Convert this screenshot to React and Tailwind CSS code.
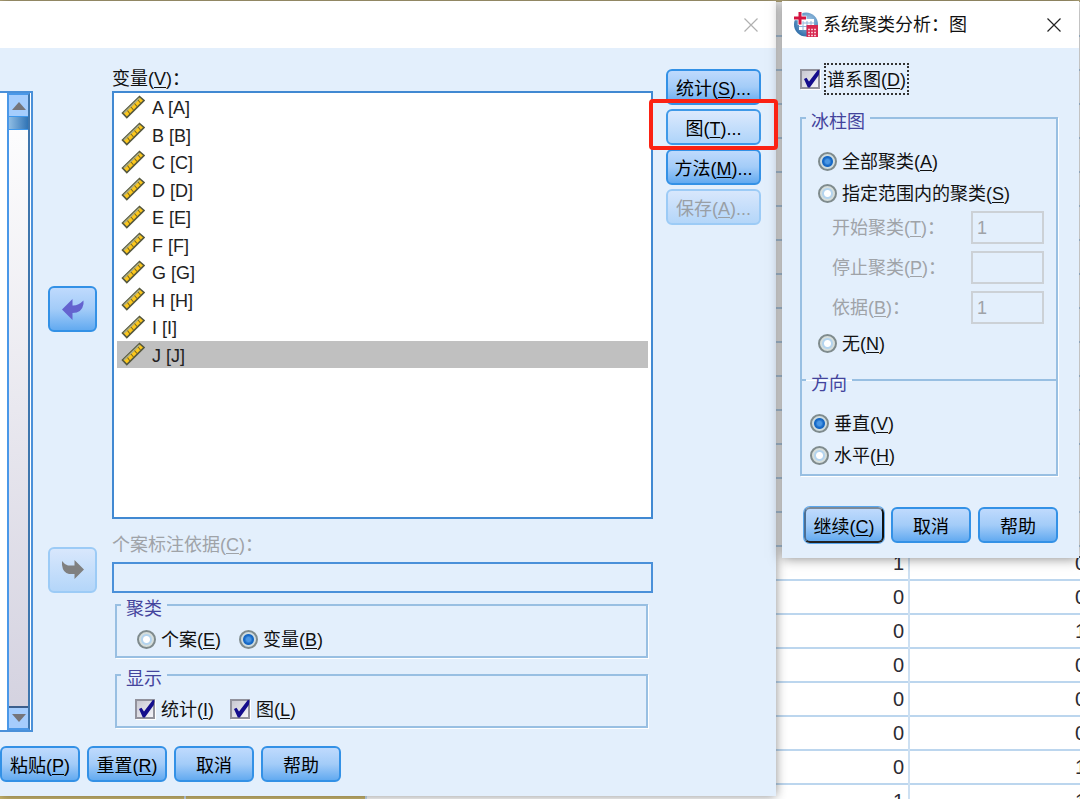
import { useId } from 'react';
import clsx from 'clsx';

const VARIABLES = ['A', 'B', 'C', 'D', 'E', 'F', 'G', 'H', 'I', 'J'];

// Two data columns, only the lower rows are filled in
const SHEET_ROWS = [
  ...Array.from({ length: 16 }, () => ['', '']),
  ['1', '0'],
  ['0', '0'],
  ['0', '1'],
  ['0', '0'],
  ['0', '0'],
  ['0', '0'],
  ['0', '1'],
  ['1', '1'],
];

const BUTTON_VARIANTS = {
  normal: 'border-[#3391e6] bg-linear-to-b from-[#bfdafd] via-[#a3ccf8] to-[#62aaf0] text-black',
  hover: 'border-[#3f99e8] bg-linear-to-b from-[#dce9fd] to-[#aed4f9] text-black',
  primary:
    'border-t-[#7c8a99] border-r-[#111] border-b-[#222] border-l-[#4b6f94] bg-linear-to-b from-[#bfdafd] via-[#a3ccf8] to-[#62aaf0] text-black shadow-[0_0_0_1px_#5aa7ee]',
  disabled: 'border-[#9ccbf6] bg-linear-to-b from-[#d8e7fc] to-[#b4d6f9] text-[#999fa6]',
};

// Caption with an underlined access key: 统计(S)...
function Caption({ text, hotkey, tail }) {
  return (
    <span className="whitespace-nowrap">
      {text}
      {hotkey && (
        <>
          (<u className="underline-offset-2">{hotkey}</u>)
        </>
      )}
      {tail}
    </span>
  );
}

function Button({ variant = 'normal', className, children, ...props }) {
  return (
    <button
      type="button"
      disabled={variant === 'disabled'}
      className={clsx(
        'flex items-center justify-center rounded-md border-2 leading-none',
        BUTTON_VARIANTS[variant],
        className,
      )}
      {...props}
    >
      {children}
    </button>
  );
}

function Radio({ name, checked, ...caption }) {
  const id = useId();
  return (
    <div className="flex h-8 items-center gap-[5px]">
      <input
        id={id}
        type="radio"
        name={name}
        defaultChecked={checked}
        className="size-[19px] shrink-0 appearance-none rounded-full border-2 border-[#7f8b8d] bg-[radial-gradient(circle,#fff_0_3px,#b4d4ee_4px_5px,#d6dedb_6px)] checked:bg-[radial-gradient(circle,#4b97e4_0_2px,#1769c6_4px_5px,#cfdcdf_6px)]"
      />
      <label htmlFor={id} className="pt-0.5">
        <Caption {...caption} />
      </label>
    </div>
  );
}

function Checkbox({ focused, ...caption }) {
  const id = useId();
  return (
    <div className={clsx('flex h-8 items-center', focused ? 'gap-1' : 'gap-1.5')}>
      <span className="relative flex size-5 shrink-0">
        <input
          id={id}
          type="checkbox"
          defaultChecked
          className="peer size-5 appearance-none border-2 border-[#92929c] bg-linear-to-br from-[#c9c9d2] to-[#f4f3f8] shadow-[1px_1px_0_#fff]"
        />
        <svg
          viewBox="0 0 20 20"
          className="pointer-events-none absolute inset-0 hidden size-5 peer-checked:block"
        >
          <path d="M4 10 6.500 8.800 9 12.500 18 .8 19.500 1.500 18.800 6 9.800 18.500 7.800 18.500Z" fill="#140d8c" />
        </svg>
      </span>
      <label
        htmlFor={id}
        className={clsx(
          'pt-0.5',
          focused && 'flex h-8 items-center border-2 border-dotted border-[#333] px-px',
        )}
      >
        <Caption {...caption} />
      </label>
    </div>
  );
}

function Group({ title, className, children }) {
  return (
    <fieldset
      className={clsx('border-2 border-[#98bfe2] px-1 shadow-[1px_1px_0_#fff]', className)}
    >
      <legend className="h-6 px-[5px] pt-1.5 leading-5 text-[#43449c]">{title}</legend>
      {children}
    </fieldset>
  );
}

function RangeField({ value, ...caption }) {
  const id = useId();
  return (
    <div className="flex items-center justify-between">
      <label htmlFor={id} className="text-[#9fa3a8]">
        <Caption {...caption} tail="：" />
      </label>
      <input
        id={id}
        type="text"
        disabled
        defaultValue={value}
        className="h-[33px] w-[73px] border-2 border-[#ccd1d6] bg-[#e3effc] px-1 pt-0.5 text-[#9fa3a8]"
      />
    </div>
  );
}

function RulerIcon() {
  return (
    <svg viewBox="0 0 24 24" className="size-6 shrink-0">
      <path d="M1.500 18 18.500 1.500 23 5.500 5.800 22.500Z" fill="#fcc71c" stroke="#55583f" strokeWidth="1.600" />
      <path d="M3 18 18.500 3" stroke="#a9ac8a" strokeWidth="1.600" />
      <path
        d="m6.500 15.500 2.500 3.500M10 12l2.500 3M13.500 8.500l2.500 3M17 5l2.500 3"
        stroke="#7d6a1c"
        strokeWidth="1.100"
      />
    </svg>
  );
}

function CloseIcon({ className }) {
  return (
    <svg viewBox="0 0 14 14" className={clsx('size-[14px]', className)} fill="none">
      <path d="M.5.5 13.5 13.5M13.5.5.5 13.5" stroke="currentColor" strokeWidth="1.2" />
    </svg>
  );
}

function AppLogo() {
  return (
    <svg viewBox="0 0 24 25" className="h-[25px] w-6 shrink-0">
      <defs>
        <radialGradient id="globe" cx="0.6" cy="0.35" r="0.7">
          <stop offset="0" stopColor="#a9cdea" />
          <stop offset="1" stopColor="#2c6ca8" />
        </radialGradient>
      </defs>
      <circle cx="12" cy="12.5" r="12" fill="url(#globe)" />
      <path d="M5 7h15v11H5z" fill="#fff" />
      <path d="M5 11h15M5 14.500h15M9 9v9M13 9v9M17 9v9" stroke="#8fb5d9" />
      <path d="M0 6h12.500M6 0v13" stroke="#fff" strokeWidth="4.500" />
      <path d="M0 6h12M6 0v12.500" stroke="#d3123f" strokeWidth="3" />
      <path d="M12.500 13H24v12H12.500z" fill="#d62850" />
      <path
        d="M14 17.500h9M14 20.500h9M14 23.500h9"
        stroke="#f7c3cf"
        strokeWidth="1.500"
        strokeDasharray="2 1"
      />
    </svg>
  );
}

function Sheet() {
  return (
    <div className="absolute top-0 left-0">
      <div className="h-0.5 bg-[#b8ab7d]" />
      <table className="w-[1090px] table-fixed border-collapse text-right text-[20px] text-[#2b2b33]">
        <colgroup>
          <col className="w-[185px] bg-[#cdb970]" />
          <col className="w-[181px] bg-[#cdb970]" />
          <col className="w-[181px]" />
          <col className="w-[181px]" />
          <col className="w-[181px]" />
          <col className="w-[181px]" />
        </colgroup>
        <tbody>
          {SHEET_ROWS.map(([left, right], i) => (
            <tr key={i} className="h-[34px] border-b-2 border-[#bcd6ee]">
              <td className="border-r-2 border-[#cde0f2]" />
              <td className="border-r-2 border-[#cde0f2]" />
              <td />
              <td />
              <td className="border-r-2 border-[#cde0f2] p-0 pr-1 leading-5">{left}</td>
              <td className="p-0 pr-1 leading-5">{right}</td>
            </tr>
          ))}
        </tbody>
      </table>
    </div>
  );
}

// Right edge of the source list, with its scroll bar
function SourceList() {
  return (
    <div className="mt-[43px] flex w-[33px] border-y-2 border-r-2 border-[#4a90d9] bg-white pl-[7px]">
      <div className="flex w-[23px] flex-col border-2 border-[#4a98e8] border-r-[#3f76ad] bg-linear-to-b from-white to-[#d3d1df]">
        <button
          type="button"
          aria-label="向上滚动"
          className="flex h-[21px] items-center justify-center bg-[#a5cdfd]"
        >
          <svg viewBox="0 0 14 8" className="h-2 w-[14px]">
            <path d="M0 8 7 0l7 8Z" fill="#75757a" />
          </svg>
        </button>
        <div className="h-[14px] border-y border-[#3f98ec] bg-linear-to-r from-[#8fbde4] to-[#2f74b5]" />
        <div className="flex-1" />
        <button
          type="button"
          aria-label="向下滚动"
          className="flex h-[22px] items-center justify-center border-t-2 border-[#3c5f8d] bg-[#a5cdfd]"
        >
          <svg viewBox="0 0 14 8" className="h-2 w-[14px]">
            <path d="M0 0h14L7 8Z" fill="#75757a" />
          </svg>
        </button>
      </div>
    </div>
  );
}

function ClusterDialog() {
  const caseId = useId();
  return (
    <section className="flex-1 bg-[#e3effc] shadow-[0_0_10px_rgba(0,0,0,0.45)]">
      <header className="flex h-[47px] items-center justify-end bg-white pr-[18px]">
        <button type="button" aria-label="关闭">
          <CloseIcon className="text-[#b0b0b0]" />
        </button>
      </header>

      <div className="flex pr-[15px]">
        <SourceList />

        {/* Transfer buttons */}
        <div className="ml-[15px] flex w-[49px] flex-col gap-[215px] pt-[238px]">
          <Button className="h-[46px]" aria-label="移回">
            <svg viewBox="0 0 22 21" className="h-[21px] w-[22px]">
              <path
                d="M0 10.500 10.500 0v6.500Q16 7 21.500 1.500V5Q20 14 10.500 14v7Z"
                fill="#6463cf"
              />
            </svg>
          </Button>
          <Button variant="disabled" className="h-[46px]" aria-label="移入">
            <svg viewBox="0 0 22 20" className="h-5 w-[22px]">
              <path d="M22 9.500 12.500 0v5.500H6Q3 5 0 1V5Q1 13 7 14h5.500v5Z" fill="#808080" />
            </svg>
          </Button>
        </div>

        <div className="ml-[15px] flex flex-1 flex-col pt-[18px] pb-1">
          <div className="h-[25px] pt-px leading-[25px]">
            <Caption text="变量" hotkey="V" tail="：" />
          </div>
          <div className="h-[428px] border-2 border-[#4189d2] bg-white px-[3px]">
            <ul role="listbox" aria-label="变量" className="grid h-[275px] auto-rows-fr">
              {VARIABLES.map(name => (
                <li
                  key={name}
                  role="option"
                  aria-selected={name === 'J'}
                  className={clsx(
                    'flex items-center gap-[7px] pl-1 leading-5 text-[#222]',
                    name === 'J' && 'bg-[#c0c0c0]',
                  )}
                >
                  <RulerIcon />
                  <span className="pt-[3px]">
                    {name} [{name}]
                  </span>
                </li>
              ))}
            </ul>
          </div>

          <label
            htmlFor={caseId}
            className="mt-[13px] mb-[5px] h-[25px] pt-px leading-[25px] text-[#9fa3a8]"
          >
            <Caption text="个案标注依据" hotkey="C" tail="：" />
          </label>
          <input
            id={caseId}
            type="text"
            disabled
            className="h-[31px] w-full border-2 border-[#4a90d9] bg-[#e3effc] px-1"
          />

          <Group title="聚类" className="mr-[5px] ml-[3px]">
            <div className="flex gap-[18px] pt-1.5 pb-px pl-4">
              <Radio name="cluster" text="个案" hotkey="E" />
              <Radio name="cluster" text="变量" hotkey="B" checked />
            </div>
          </Group>
          <Group title="显示" className="mt-[5px] mr-[5px] ml-[3px]">
            <div className="flex gap-4 pt-1.5 pb-px pl-[14px]">
              <Checkbox text="统计" hotkey="I" />
              <Checkbox text="图" hotkey="L" />
            </div>
          </Group>
        </div>

        <div className="ml-[13px] flex w-[95px] flex-col gap-1 pt-[21px]">
          <Button className="h-9 pt-[3px]">
            <Caption text="统计" hotkey="S" tail="..." />
          </Button>
          <div className="relative flex flex-col">
            <Button variant="hover" className="h-9 pt-[3px]">
              <Caption text="图" hotkey="T" tail="..." />
            </Button>
            <div className="pointer-events-none absolute -inset-x-[17px] -top-[10px] -bottom-[5px] z-10 rounded-sm border-4 border-[#fb2213]" />
          </div>
          <Button className="h-9 pt-[3px]">
            <Caption text="方法" hotkey="M" tail="..." />
          </Button>
          <Button variant="disabled" className="h-9 pt-[3px]">
            <Caption text="保存" hotkey="A" tail="..." />
          </Button>
        </div>
      </div>

      <footer className="flex gap-[7px] pt-[14px] pb-[14px]">
        <Button className="h-9 w-20 pt-[3px]">
          <Caption text="粘贴" hotkey="P" />
        </Button>
        <Button className="h-9 w-20 pt-[3px]">
          <Caption text="重置" hotkey="R" />
        </Button>
        <Button className="h-9 w-20 pt-[3px]">取消</Button>
        <Button className="h-9 w-20 pt-[3px]">帮助</Button>
      </footer>
    </section>
  );
}

function PlotsDialog() {
  return (
    <section className="w-[297px] shrink-0 bg-[#e3effc] shadow-[0_0_12px_rgba(0,0,0,0.5)]">
      <header className="flex h-[47px] items-center gap-[5px] bg-white pr-[18px] pl-3">
        <AppLogo />
        <h1 className="flex-1">系统聚类分析：图</h1>
        <button type="button" aria-label="关闭">
          <CloseIcon className="text-[#222]" />
        </button>
      </header>

      <div className="pt-[15px] pr-[21px] pb-[15px] pl-[18px]">
        <Checkbox text="谱系图" hotkey="D" focused />

        <Group title="冰柱图" className="mt-[11px] border-b-0">
          <div className="pt-[15px] pb-[21px] pl-3">
            <Radio name="icicle" text="全部聚类" hotkey="A" checked />
            <Radio name="icicle" text="指定范围内的聚类" hotkey="S" />
            <div className="mt-[2px] mb-[3px] flex flex-col gap-[7px] pr-2 pl-[14px]">
              <RangeField text="开始聚类" hotkey="T" value="1" />
              <RangeField text="停止聚类" hotkey="P" value="" />
              <RangeField text="依据" hotkey="B" value="1" />
            </div>
            <Radio name="icicle" text="无" hotkey="N" />
          </div>
        </Group>

        <Group title="方向" className="-mt-3">
          <div className="pt-[15px] pb-[3px] pl-1">
            <Radio name="direction" text="垂直" hotkey="V" checked />
            <Radio name="direction" text="水平" hotkey="H" />
          </div>
        </Group>

        <footer className="mt-[31px] flex justify-end gap-[7px]">
          <Button variant="primary" className="h-9 w-20 pt-[3px]">
            <Caption text="继续" hotkey="C" />
          </Button>
          <Button className="h-9 w-20 pt-[3px]">取消</Button>
          <Button className="h-9 w-20 pt-[3px]">帮助</Button>
        </footer>
      </div>
    </section>
  );
}

export default function App() {
  return (
    <main className="relative h-screen overflow-hidden bg-white font-['Liberation_Sans','Noto_Sans_CJK_SC',sans-serif] text-[18px] leading-6 text-[#111]">
      <Sheet />
      <div className="relative flex items-start gap-[6px] pt-px pr-px">
        <ClusterDialog />
        <PlotsDialog />
      </div>
    </main>
  );
}
